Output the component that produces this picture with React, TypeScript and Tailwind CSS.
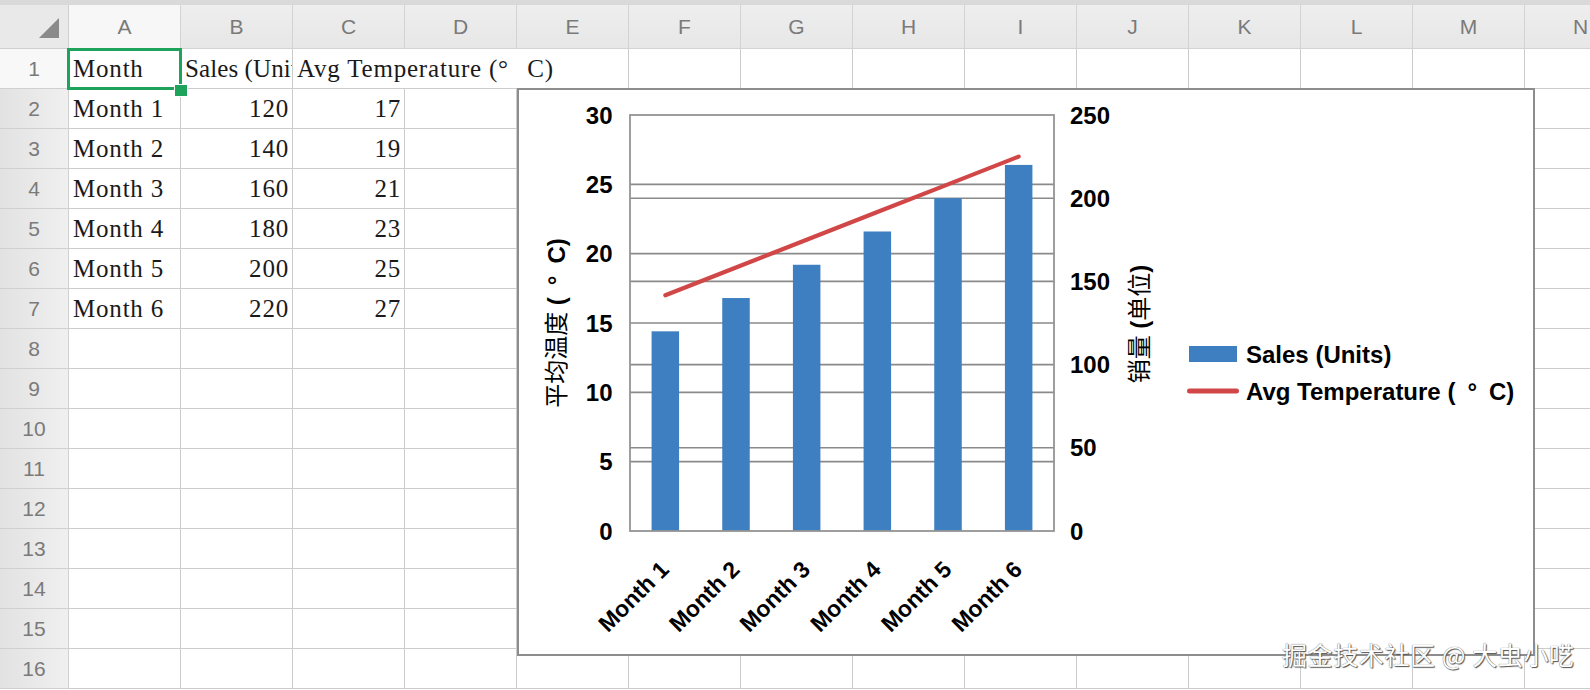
import React from "react";

const COLS = ["A", "B", "C", "D", "E", "F", "G", "H", "I", "J", "K", "L", "M", "N"];
const ROWS = Array.from({ length: 16 }, (_, i) => i + 1);

const sales = [120, 140, 160, 180, 200, 220];
const temps = [17, 19, 21, 23, 25, 27];

type Cell = {
  text: string;
  align?: "left" | "right";
  clip?: boolean;
  overflow?: boolean;
  noRight?: boolean;
};

function cellFor(r: number, c: number): Cell | null {
  if (r === 1) {
    if (c === 0) return { text: "Month" };
    if (c === 1) return { text: "Sales (Units)", clip: true };
    if (c === 2) return { text: "Avg Temperature (°\u2002\u2006C)", overflow: true, noRight: true };
    if (c === 3) return { text: "", noRight: true };
    return null;
  }
  if (r >= 2 && r <= 7) {
    const i = r - 2;
    if (c === 0) return { text: `Month ${i + 1}` };
    if (c === 1) return { text: String(sales[i]), align: "right" };
    if (c === 2) return { text: String(temps[i]), align: "right" };
  }
  return null;
}

function Chart() {
  const plotL = 630;
  const plotR = 1054;
  const plotT = 115;
  const plotB = 531;
  const plotH = plotB - plotT;
  const catW = (plotR - plotL) / 6;
  const barW = 27.5;
  const cx = (i: number) => plotL + (i + 0.5) * catW;
  const leftTicks = [0, 5, 10, 15, 20, 25, 30];
  const rightTicks = [0, 50, 100, 150, 200, 250];
  const yL = (v: number) => plotB - (v / 30) * plotH;
  const yR = (v: number) => plotB - (v / 250) * plotH;
  const linePts = temps.map((t, i) => `${cx(i)},${yL(t)}`).join(" ");
  const font = "'Liberation Sans', Arial, 'Noto Sans CJK SC', sans-serif";

  return (
    <div className="absolute left-[517px] top-[88px] w-[1018px] h-[568px] border-2 border-[#8d8d8d] bg-white">
      <svg width="1014" height="564" viewBox="519 90 1014 564" className="block">
        {leftTicks.slice(1, -1).map((v) => (
          <line key={"gl" + v} x1={plotL} x2={plotR} y1={yL(v)} y2={yL(v)} stroke="#8a8a8a" strokeWidth="1.6" />
        ))}
        {rightTicks.slice(1, -1).map((v) => (
          <line key={"gr" + v} x1={plotL} x2={plotR} y1={yR(v)} y2={yR(v)} stroke="#8a8a8a" strokeWidth="1.6" />
        ))}
        {sales.map((s, i) => (
          <rect key={"b" + i} x={cx(i) - barW / 2} y={yR(s)} width={barW} height={plotB - yR(s)} fill="#3d7fc1" />
        ))}
        <rect x={plotL} y={plotT} width={plotR - plotL} height={plotH} fill="none" stroke="#949494" strokeWidth="1.8" />
        <polyline
          points={linePts}
          fill="none"
          stroke="#d14747"
          strokeWidth="4.2"
          strokeLinecap="round"
          strokeLinejoin="round"
        />

        <g fontFamily={font} fontWeight="700" fontSize="24" fill="#000">
          {leftTicks.map((v) => (
            <text key={"tl" + v} x={612.5} y={yL(v) + 8.5} textAnchor="end">
              {v}
            </text>
          ))}
          {rightTicks.map((v) => (
            <text key={"tr" + v} x={1070} y={yR(v) + 8.5} textAnchor="start">
              {v}
            </text>
          ))}
          {sales.map((_, i) => {
            const px = cx(i) + 5;
            const py = 571;
            return (
              <text
                key={"xl" + i}
                x={px}
                y={py}
                fontSize="23"
                textAnchor="end"
                transform={`rotate(-45 ${px} ${py})`}
              >
                Month {i + 1}
              </text>
            );
          })}

          <text x={0} y={0} textAnchor="middle" transform="translate(565 323) rotate(-90)">
            <tspan fontWeight="400">平均温度</tspan>
            <tspan> (</tspan>
            <tspan>{"\u2002°\u2002C)"}</tspan>
          </text>
          <text x={0} y={0} textAnchor="middle" transform="translate(1148 324) rotate(-90)">
            <tspan fontWeight="400">销量</tspan>
            <tspan> (</tspan>
            <tspan fontWeight="400">单位</tspan>
            <tspan>)</tspan>
          </text>

          <rect x={1189} y={346} width={48} height={16} fill="#3d7fc1" />
          <text x={1246} y={363}>
            Sales (Units)
          </text>
          <line x1={1189.5} x2={1236.5} y1={391} y2={391} stroke="#d14747" strokeWidth="5" strokeLinecap="round" />
          <text x={1246} y={400}>
            {"Avg Temperature (\u2002°\u2002C)"}
          </text>
        </g>
      </svg>
    </div>
  );
}

export default function App() {
  const serif = "font-['Liberation_Serif',_'Times_New_Roman',_serif]";
  return (
    <div className="relative w-[1590px] h-[690px] overflow-hidden bg-white">
      <div className="h-[5px] bg-[#d9d9d9]" />
      {/* column header row */}
      <div className="flex h-[44px] font-['Liberation_Sans',_Arial,_sans-serif] text-[21px] text-[#7a7a7a]">
        <div className="relative w-[69px] shrink-0 bg-[#e9e9e9] border-r border-b border-[#cfcfcf]">
          <svg className="absolute left-0 top-0" width="69" height="44">
            <polygon points="59,13 59,33 39,33" fill="#8a8a8a" />
          </svg>
        </div>
        {COLS.map((c, i) => (
          <div
            key={c}
            className={
              "w-[112px] shrink-0 flex items-center justify-center border-r border-b border-[#d3d3d3] " +
              (i === 0 ? "bg-[#f7f7f7]" : "bg-linear-to-b from-[#eeeeee] to-[#e7e7e7]")
            }
          >
            {c}
          </div>
        ))}
      </div>
      {/* body rows */}
      {ROWS.map((r) => (
        <div key={r} className="flex h-[40px]">
          <div
            className={
              "w-[69px] shrink-0 flex items-center justify-center border-r border-b border-[#d0d0d0] font-['Liberation_Sans',_Arial,_sans-serif] text-[21px] text-[#7a7a7a] " +
              (r === 1 ? "bg-[#f8f8f8]" : "bg-linear-to-r from-[#e2e2e2] to-[#f0f0f0]")
            }
          >
            {r}
          </div>
          {COLS.map((c, ci) => {
            const cell = cellFor(r, ci);
            return (
              <div
                key={c}
                className={
                  "relative w-[112px] shrink-0 flex items-center border-b border-[#cccccc] text-[25px] text-[#1a1a1a] whitespace-pre " +
                  serif +
                  " " +
                  (cell?.clip ? "tracking-[0.1px] " : "tracking-[0.8px] ") +
                  (cell?.noRight ? "" : "border-r ") +
                  (cell?.clip ? "overflow-hidden " : "overflow-visible ") +
                  (cell?.align === "right" ? "justify-end pr-[3px] " : "pl-[4px] ")
                }
              >
                {cell?.text ? <span className={cell.overflow ? "relative z-10" : ""}>{cell.text}</span> : null}
              </div>
            );
          })}
        </div>
      ))}

      {/* selection */}
      <div className="absolute left-[67px] top-[48px] w-[115px] h-[42px] border-[3px] border-[#1ea35c]" />
      <div className="absolute left-[174px] top-[84px] w-[14px] h-[13px] bg-[#1ea35c] border border-white" />

      <Chart />

      <div className="absolute left-[1282px] top-[638px] font-['Noto_Sans_CJK_SC',_sans-serif] text-[25px] leading-[32px] tracking-[0.6px] text-white [text-shadow:0_0_1px_#444,1px_1px_1px_#555] whitespace-pre">
        掘金技术社区 @ 大虫小呓
      </div>
    </div>
  );
}
